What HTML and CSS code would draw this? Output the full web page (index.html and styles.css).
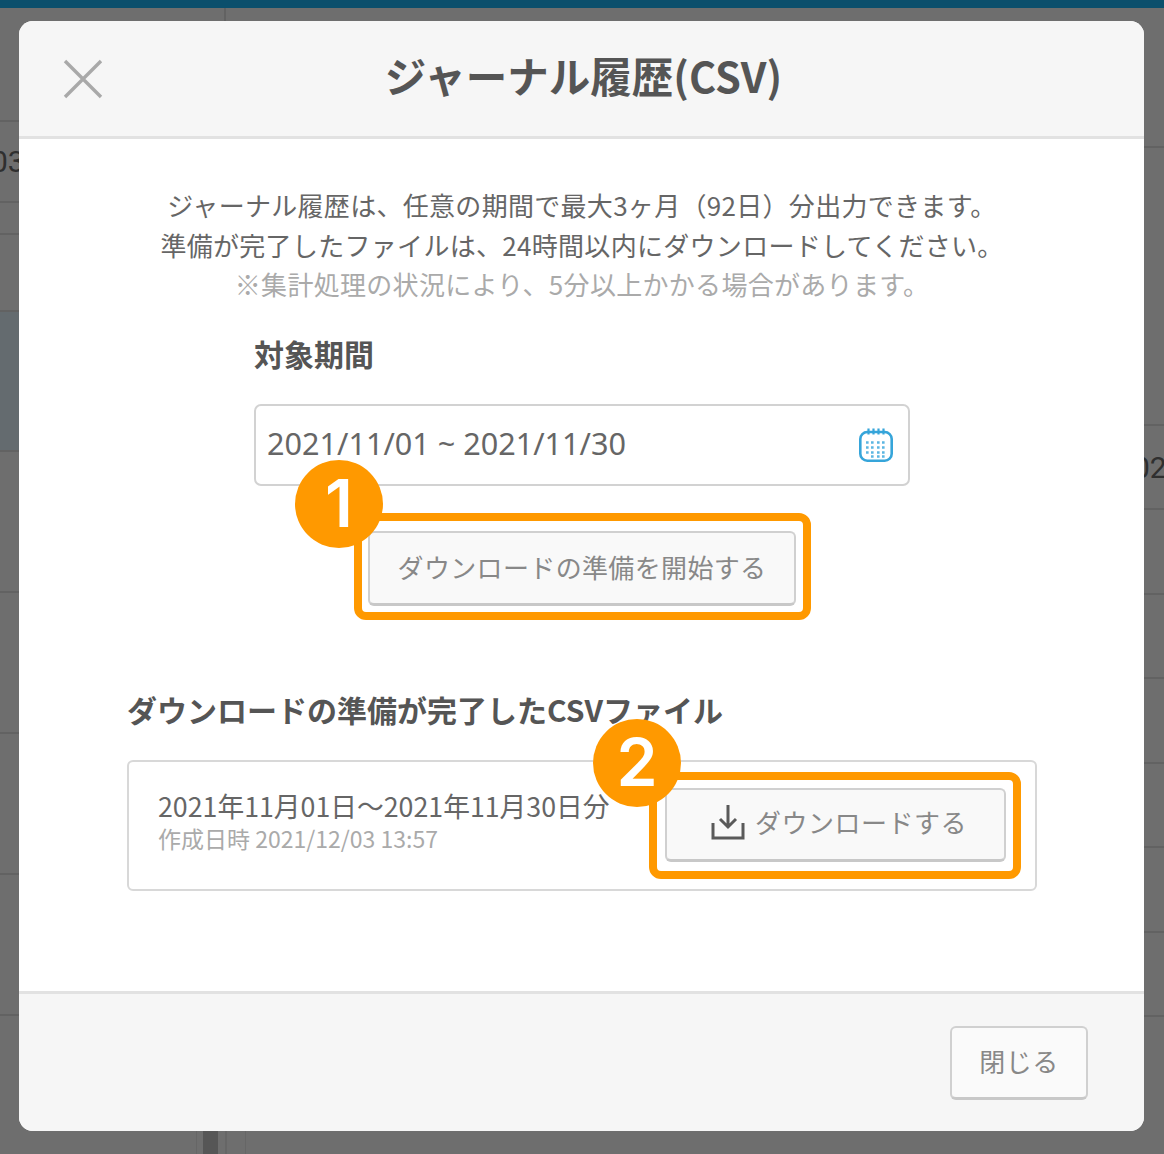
FILE: index.html
```html
<!DOCTYPE html>
<html lang="ja">
<head>
<meta charset="utf-8">
<title>ジャーナル履歴(CSV)</title>
<link rel="stylesheet" href="styles.css">
</head>
<body>
<div class="page">
  <div class="topbar"></div>
  <div class="backdrop">
    <div class="side side-left">
      <div class="row r-l1"></div>
      <div class="row r-l2"><span class="cell-num num-left">03</span></div>
      <div class="row r-l3"></div>
      <div class="row r-l4"></div>
      <div class="row r-l5 tinted"></div>
      <div class="row r-l6"></div>
      <div class="row r-l6"></div>
      <div class="row r-l6"></div>
      <div class="row r-l6"></div>
    </div>
    <div class="side side-mid">
      <div class="mid-top"></div>
      <div class="mid-gap"></div>
      <div class="mid-bottom"><span class="mid-col"></span><span class="mid-line"></span></div>
    </div>
    <div class="side side-right">
      <div class="row r-r1"></div>
      <div class="row r-r2"></div>
      <div class="row r-r3"><span class="cell-num num-right">02</span></div>
      <div class="row r-r4"></div>
      <div class="row r-r4"></div>
      <div class="row r-r4"></div>
      <div class="row r-r4"></div>
      <div class="row r-r4"></div>
      <div class="row r-r4"></div>
    </div>
  </div>

  <section class="modal">
    <header class="modal-head">
      <button class="close-x" type="button" aria-label="閉じる">
        <svg viewBox="0 0 40 40" width="40" height="40"><path d="M2 2 38 38M38 2 2 38"/></svg>
      </button>
      <h1 class="modal-title">ジャーナル履歴(CSV)</h1>
    </header>

    <div class="modal-body">
      <div class="intro">
        <p>ジャーナル履歴は、任意の期間で最大3ヶ月（92日）分出力できます。</p>
        <p>準備が完了したファイルは、24時間以内にダウンロードしてください。</p>
        <p class="intro-note">※集計処理の状況により、5分以上かかる場合があります。</p>
      </div>

      <div class="period">
        <h2 class="section-title">対象期間</h2>
        <div class="date-field">
          <span class="date-value">2021/11/01 ~ 2021/11/30</span>
          <svg class="cal-icon" viewBox="0 0 34 34" width="34" height="34">
            <rect class="cal-frame" x="1.3" y="4" width="31.4" height="28.7" rx="7"/>
            <path class="cal-ticks" d="M9.5 0.5v6M14.5 0.5v6M19.5 0.5v6M24.5 0.5v6"/>
            <path class="cal-dots" d="M7 14.5h3M12 14.5h3M18 14.5h3M23 14.5h3M7 19.5h3M12 19.5h3M18 19.5h3M23 19.5h3M7 24.5h3M12 24.5h3M18 24.5h3M23 24.5h3M12 28.5h3M18 28.5h3M23 28.5h3"/>
          </svg>
        </div>
        <div class="start-wrap">
          <button class="btn btn-start" type="button">ダウンロードの準備を開始する</button>
          <div class="mark mark-start"><span class="badge badge-start">1</span></div>
        </div>
      </div>

      <h2 class="section-title ready-title">ダウンロードの準備が完了したCSVファイル</h2>
      <div class="file-card">
        <div class="file-info">
          <div class="file-name">2021年11月01日〜2021年11月30日分</div>
          <div class="file-date">作成日時 2021/12/03 13:57</div>
        </div>
        <div class="dl-wrap">
          <button class="btn btn-dl" type="button">
            <svg class="dl-icon" viewBox="0 0 34 36" width="34" height="36"><path d="M17 1v22M9 15l8 8 8-8M2 19v15h30V19"/></svg>
            <span>ダウンロードする</span>
          </button>
          <div class="mark mark-dl"><span class="badge badge-dl">2</span></div>
        </div>
      </div>
    </div>

    <footer class="modal-foot">
      <button class="btn btn-close" type="button">閉じる</button>
    </footer>
  </section>
</div>
</body>
</html>
```

FILE: styles.css
```css
* { box-sizing: border-box; }
html, body { margin: 0; padding: 0; }
body {
  font-family: "Noto Sans CJK JP", "Noto Sans", sans-serif;
  color: #666;
  background: #6e6e6e;
}
.page {
  position: relative;
  width: 1164px;
  height: 1154px;
  overflow: hidden;
  background: #6e6e6e;
}
.topbar { height: 8px; background: #0b4f6c; }

/* dimmed page behind the dialog */
.backdrop { display: flex; height: 1146px; }
.side { display: flex; flex-direction: column; }
.side-left { width: 196px; }
.side-mid { width: 50px; }
.side-right { flex: 1; align-items: flex-end; }
.side-right .row { width: 40px; }
.side-left .row { width: 100%; }
.row { border-bottom: 2px solid #626262; flex: none; overflow: hidden; display: flex; align-items: center; }
.r-l1 { height: 114px; }
.r-l2 { height: 81px; }
.r-l3 { height: 32px; }
.r-l4 { height: 77px; }
.r-l5 { height: 140px; }
.r-l6 { height: 141px; }
.tinted { background: #646b6f; }
.r-r1 { height: 140px; }
.r-r2 { height: 278px; }
.r-r3 { height: 84px; }
.r-r4 { height: 84.5px; }
.cell-num { font-family: "Roboto", sans-serif; font-size: 30px; color: #2f2f2f; }
.num-left { margin-left: -9px; }
.num-right { margin-left: 9px; }
.mid-top { height: 13px; margin-left: 28px; border-left: 2px solid #626262; }
.mid-gap { flex: 1; }
.mid-bottom { height: 23px; display: flex; border-left: 1px solid #666; border-right: 1px solid #666; }
.mid-col { width: 15px; margin-left: 6px; background: #565656; }
.mid-line { width: 2px; margin-left: 7px; background: #666; }

/* dialog */
.modal {
  position: absolute;
  left: 19px;
  top: 21px;
  width: 1125px;
  height: 1110px;
  display: flex;
  flex-direction: column;
  background: #fff;
  border-radius: 14px;
  overflow: hidden;
}
.modal-head {
  position: relative;
  flex: none;
  height: 118px;
  display: flex;
  align-items: center;
  justify-content: center;
  background: #f6f6f6;
  border-bottom: 3px solid #e2e2e2;
}
.close-x {
  position: absolute;
  left: 44px;
  top: 38px;
  width: 40px;
  height: 40px;
  padding: 0;
  border: 0;
  background: none;
}
.close-x svg { display: block; fill: none; stroke: #a9a9a9; stroke-width: 3.4; }
.modal-title { margin: 0 0 8px 4px; font-size: 41.5px; font-weight: 700; line-height: 56px; color: #555; }

.modal-body { flex: 1; min-height: 0; padding: 46px 107px 0 108px; position: relative; }
.intro { text-align: center; font-size: 26px; line-height: 39.5px; color: #666; letter-spacing: .3px; }
.intro p { margin: 0; }
.intro .intro-note { color: #aaa; }

.period { width: 656px; margin: 27px auto 0; }
.section-title { margin: 0; font-size: 30px; line-height: 44px; font-weight: 700; color: #555; }
.date-field {
  display: flex;
  align-items: center;
  justify-content: space-between;
  height: 82px;
  margin-top: 29px;
  padding: 0 15px 0 11px;
  border: 2px solid #d2d2d2;
  border-radius: 7px;
  background: #fff;
}
.date-value { font-family: "Noto Sans", sans-serif; font-size: 30.6px; color: #666; padding-bottom: 4px; }
.cal-icon { display: block; fill: none; }
.cal-frame { stroke: #36a5da; stroke-width: 2.6; fill: #fff; }
.cal-ticks { stroke: #36a5da; stroke-width: 2.2; }
.cal-dots { stroke: #5cb6e2; stroke-width: 2.6; stroke-dasharray: 2.6 2.4; }

.btn {
  font-family: inherit;
  font-size: 26px;
  color: #888;
  background: #f9f9f9;
  border: 2px solid #d0d0d0;
  border-bottom: 3px solid #c8c8c8;
  border-radius: 6px;
  padding: 0;
}
.start-wrap { position: relative; width: 428px; margin: 45px auto 0; }
.btn-start { display: block; width: 428px; height: 75px; padding-bottom: 2px; letter-spacing: .35px; }

.mark {
  position: absolute;
  border: 8px solid #ff9900;
  border-radius: 12px;
  pointer-events: none;
}
.mark-start { left: -14px; top: -18px; width: 457px; height: 107px; }
.mark-dl { left: -16px; top: -16px; width: 372px; height: 107px; }
.badge {
  position: absolute;
  width: 88px;
  height: 88px;
  border-radius: 50%;
  background: #ff9900;
  color: #fff;
  font-family: "Inter", sans-serif;
  font-size: 66px;
  font-weight: 600;
  line-height: 86px;
  text-align: center;
}
.badge-start { left: -67px; top: -61px; }
.badge-dl { left: -64px; top: -61px; }

.ready-title { margin-top: 81px; }
.file-card {
  display: flex;
  align-items: center;
  justify-content: space-between;
  width: 910px;
  height: 131px;
  margin-top: 29px;
  padding: 0 29px 0 29px;
  border: 2px solid #d8d8d8;
  border-radius: 6px;
}
.file-info { padding-bottom: 9px; }
.file-name { font-size: 26.75px; line-height: 35px; color: #666; white-space: nowrap; }
.file-date { font-size: 23px; line-height: 30px; color: #aaa; }
.dl-wrap { position: relative; margin-left: auto; }
.btn-dl { display: flex; align-items: center; gap: 10px; width: 341px; height: 74px; padding: 0 0 6px 44px; letter-spacing: .5px; }
.dl-icon { display: block; fill: none; stroke: #5a5a5a; stroke-width: 3; }

.modal-foot {
  flex: none;
  height: 140px;
  display: flex;
  align-items: flex-start;
  justify-content: flex-end;
  padding: 32px 56px 0 0;
  background: #f6f6f6;
  border-top: 3px solid #e2e2e2;
}
.btn-close { width: 138px; height: 74px; background: #fafafa; padding-bottom: 4px; letter-spacing: .5px; }
```
